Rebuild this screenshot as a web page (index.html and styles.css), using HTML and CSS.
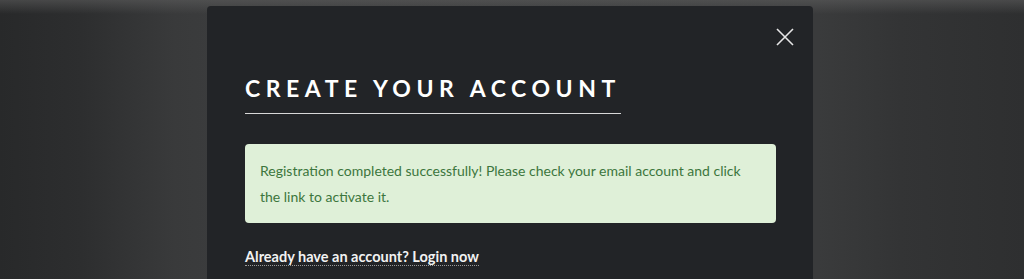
FILE: index.html
```html
<!DOCTYPE html>
<html lang="en">
<head>
<meta charset="utf-8">
<title>Create your account</title>
<link rel="stylesheet" href="styles.css">
</head>
<body>
<div class="backdrop">
  <div class="modal">
    <div class="modal-top">
      <button class="close" aria-label="Close">
        <svg width="18" height="18" viewBox="0 0 18 18"><path d="M1 1L17 17M17 1L1 17" stroke="#e6e6e6" stroke-width="1.6" fill="none"/></svg>
      </button>
    </div>
    <h2 class="title">CREATE YOUR ACCOUNT</h2>
    <div class="alert">Registration completed successfully! Please check your email account and click the link to activate it.</div>
    <p class="login"><a href="#">Already have an account? Login now</a></p>
  </div>
</div>
</body>
</html>
```
FILE: styles.css
```css
html, body {
  margin: 0;
  padding: 0;
  height: 100%;
}
body {
  font-family: Lato, "Noto Sans", sans-serif;
  background-color: #2e2f30;
  background-image:
    linear-gradient(180deg, rgba(95,95,95,0.55) 0px, rgba(95,95,95,0) 14px),
    linear-gradient(90deg, #28292a 0%, #2d2e2f 8%, #393a3b 17%, #3b3c3d 21%, #3a3b3c 80%, #333435 88%, #2e2f30 100%);
  overflow: hidden;
}
.backdrop {
  display: flex;
  justify-content: center;
  padding-top: 6px;
}
.modal {
  width: 606px;
  margin-right: 4px;
  box-sizing: border-box;
  background: #222427;
  border-radius: 4px 4px 0 0;
  padding: 0 37px 0 38px;
  height: 273px;
}
.modal-top {
  display: flex;
  justify-content: flex-end;
  padding-top: 22px;
  margin-right: -18px;
  height: 18px;
}
.close {
  background: none;
  border: 0;
  padding: 0;
  width: 18px;
  height: 18px;
  cursor: pointer;
  display: block;
}
.close svg { display: block; }
.title {
  display: inline-block;
  margin: 27px 0 0;
  font-size: 23px;
  font-weight: 700;
  letter-spacing: 0.24em;
  color: #ffffff;
  line-height: 30px;
  padding-bottom: 10px;
  border-bottom: 1px solid #d8d8d8;
}
.alert {
  margin-top: 30px;
  background: #dff0d8;
  color: #3c763d;
  border-radius: 4px;
  padding: 14px 15px 13px;
  font-size: 14px;
  line-height: 26px;
}
.login {
  margin: 24px 0 0;
  font-size: 14.5px;
  font-weight: 700;
  line-height: 20px;
}
.login a {
  color: #f2f2f2;
  text-decoration: none;
  border-bottom: 1px dotted #9a9a9a;
}
```
